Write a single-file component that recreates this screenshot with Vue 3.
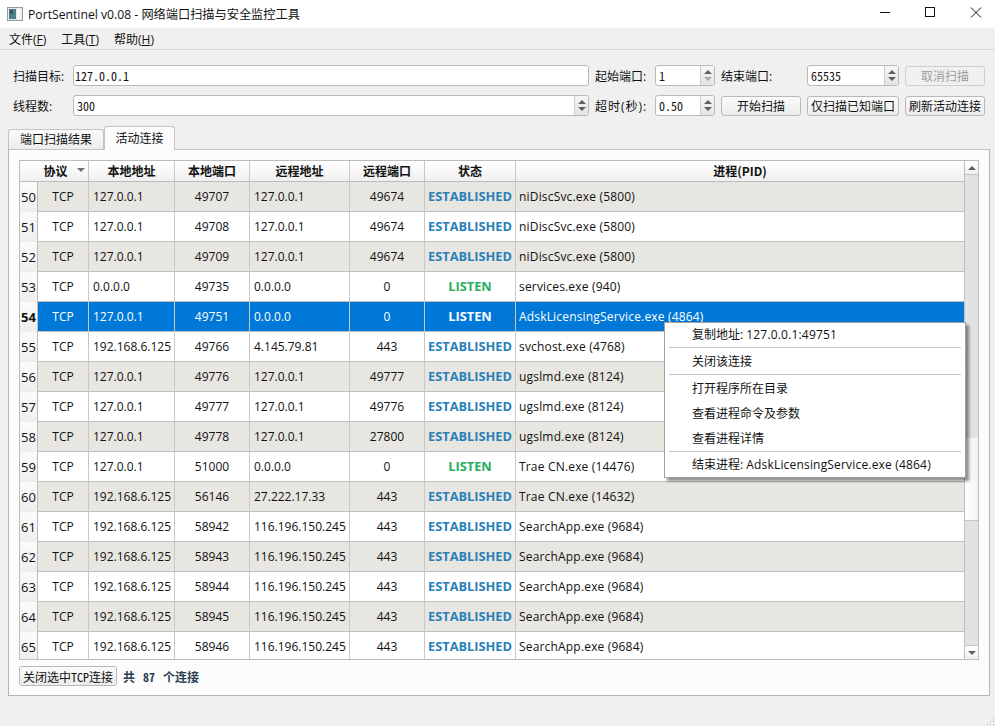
<script setup>
const proc = {
  ni: 'niDiscSvc.exe (5800)',
  ugs: 'ugslmd.exe (8124)',
  search: 'SearchApp.exe (9684)',
}
const LOCAL = '127.0.0.1'
const LAN = '192.168.6.125'
const ANY = '0.0.0.0'
const FAR = '116.196.150.245'

const rows = [
  [50, LOCAL, 49707, LOCAL, 49674, 'ESTABLISHED', proc.ni],
  [51, LOCAL, 49708, LOCAL, 49674, 'ESTABLISHED', proc.ni],
  [52, LOCAL, 49709, LOCAL, 49674, 'ESTABLISHED', proc.ni],
  [53, ANY, 49735, ANY, 0, 'LISTEN', 'services.exe (940)'],
  [54, LOCAL, 49751, ANY, 0, 'LISTEN', 'AdskLicensingService.exe (4864)'],
  [55, LAN, 49766, '4.145.79.81', 443, 'ESTABLISHED', 'svchost.exe (4768)'],
  [56, LOCAL, 49776, LOCAL, 49777, 'ESTABLISHED', proc.ugs],
  [57, LOCAL, 49777, LOCAL, 49776, 'ESTABLISHED', proc.ugs],
  [58, LOCAL, 49778, LOCAL, 27800, 'ESTABLISHED', proc.ugs],
  [59, LOCAL, 51000, ANY, 0, 'LISTEN', 'Trae CN.exe (14476)'],
  [60, LAN, 56146, '27.222.17.33', 443, 'ESTABLISHED', 'Trae CN.exe (14632)'],
  [61, LAN, 58942, FAR, 443, 'ESTABLISHED', proc.search],
  [62, LAN, 58943, FAR, 443, 'ESTABLISHED', proc.search],
  [63, LAN, 58944, FAR, 443, 'ESTABLISHED', proc.search],
  [64, LAN, 58945, FAR, 443, 'ESTABLISHED', proc.search],
  [65, LAN, 58946, FAR, 443, 'ESTABLISHED', proc.search],
].map(([no, local, lport, remote, rport, state, process]) => ({ no, local, lport, remote, rport, state, process }))

const headers = ['协议', '本地地址', '本地端口', '远程地址', '远程端口', '状态', '进程(PID)']
const selectedNo = 54

const rowClass = (row) => ({
  selected: row.no === selectedNo,
  alt: row.no % 2 === 0,
})
</script>

<template>
  <div class="window">
    <header class="titlebar">
      <svg class="app-icon" width="16" height="16" viewBox="0 0 16 16">
        <rect x="0.5" y="1.5" width="15" height="13" fill="#e8e8e8" stroke="#9a9a9a" />
        <rect x="2" y="3" width="7" height="10" fill="#4f7f88" />
        <rect x="3" y="4" width="3" height="4" fill="#2f5566" />
        <rect x="10" y="3" width="4" height="10" fill="#f7f7f7" />
      </svg>
      <span class="title">PortSentinel v0.08 - 网络端口扫描与安全监控工具</span>
      <div class="win-controls">
        <svg width="46" height="28" viewBox="0 0 46 28"><path d="M18 12.5h10" stroke="#111" fill="none" /></svg>
        <svg width="46" height="28" viewBox="0 0 46 28"><rect x="18.5" y="7.5" width="9" height="9" stroke="#111" fill="none" /></svg>
        <svg width="46" height="28" viewBox="0 0 46 28"><path d="M18 7.5l10 10M28 7.5l-10 10" stroke="#111" fill="none" /></svg>
      </div>
    </header>

    <nav class="menubar">
      <span>文件(<u>F</u>)</span>
      <span>工具(<u>T</u>)</span>
      <span>帮助(<u>H</u>)</span>
    </nav>

    <section class="form">
      <label>扫描目标:</label>
      <div class="input field mono">127.0.0.1</div>
      <label>起始端口:</label>
      <div class="spin field mono">
        <span class="val">1</span>
        <span class="arrows"><i class="up"></i><i class="down off"></i></span>
      </div>
      <label>结束端口:</label>
      <div class="spin field mono">
        <span class="val">65535</span>
        <span class="arrows"><i class="up off"></i><i class="down"></i></span>
      </div>
      <button class="btn" disabled>取消扫描</button>

      <label>线程数:</label>
      <div class="spin field mono">
        <span class="val">300</span>
        <span class="arrows"><i class="up"></i><i class="down"></i></span>
      </div>
      <label class="timeout">超时(秒):</label>
      <div class="spin field mono">
        <span class="val">0.50</span>
        <span class="arrows"><i class="up"></i><i class="down"></i></span>
      </div>
      <button class="btn">开始扫描</button>
      <button class="btn">仅扫描已知端口</button>
      <button class="btn">刷新活动连接</button>
    </section>

    <div class="tabs">
      <div class="tab">端口扫描结果</div>
      <div class="tab active">活动连接</div>
    </div>

    <section class="panel">
      <div class="table">
        <div class="table-main">
          <div class="thead">
            <div class="corner"></div>
            <div v-for="(h, i) in headers" :key="h" class="th">
              {{ h }}
              <span v-if="i === 0" class="sort"></span>
            </div>
          </div>
          <div class="tbody">
            <div v-for="row in rows" :key="row.no" class="tr" :class="rowClass(row)">
              <div class="rowhead">{{ row.no }}</div>
              <div class="td center">TCP</div>
              <div class="td">{{ row.local }}</div>
              <div class="td center">{{ row.lport }}</div>
              <div class="td">{{ row.remote }}</div>
              <div class="td center">{{ row.rport }}</div>
              <div class="td center state" :class="row.state.toLowerCase()">{{ row.state }}</div>
              <div class="td process">{{ row.process }}</div>
            </div>
          </div>
        </div>
        <div class="scrollbar">
          <div class="sb-btn"><i class="up"></i></div>
          <div class="sb-track">
            <div class="sb-handle"></div>
          </div>
          <div class="sb-btn"><i class="down"></i></div>
        </div>
      </div>

      <div class="statusline">
        <button class="btn close-btn">关闭选中<span class="mono">TCP</span>连接</button>
        <span class="count">共<span class="mono">87</span>个连接</span>
      </div>

      <div class="context-menu">
        <div class="item short">复制地址: <span class="latin">127.0.0.1:49751</span></div>
        <div class="sep"></div>
        <div class="item">关闭该连接</div>
        <div class="sep"></div>
        <div class="item">打开程序所在目录</div>
        <div class="item">查看进程命令及参数</div>
        <div class="item">查看进程详情</div>
        <div class="sep"></div>
        <div class="item short">结束进程: <span class="latin">AdskLicensingService.exe (4864)</span></div>
      </div>
    </section>

    <svg class="grip" width="9" height="9" viewBox="0 0 9 9" fill="#b4b4b4">
      <rect x="7" y="1" width="1" height="1" />
      <rect x="4" y="4" width="1" height="1" />
      <rect x="7" y="4" width="1" height="1" />
      <rect x="1" y="7" width="1" height="1" />
      <rect x="4" y="7" width="1" height="1" />
      <rect x="7" y="7" width="1" height="1" />
    </svg>
  </div>
</template>

<style>
html, body { margin: 0; background: #f0f0f0; }
</style>

<style scoped>
.window {
  position: relative;
  width: 995px;
  height: 726px;
  overflow: hidden;
  background: #f0f0f0;
  color: #000;
  font-family: "Open Sans", "Noto Sans CJK SC", sans-serif;
  font-size: 12px;
}

/* half-width latin from the CJK face, 6px per char like the bitmap font in the app */
.mono {
  font-family: "Noto Sans CJK SC", monospace;
  font-feature-settings: "hwid";
}

.titlebar {
  height: 28px;
  background: #fff;
  display: flex;
  align-items: center;
  padding-left: 7px;
}
.app-icon { margin-right: 5px; }
.title { font-size: 12.2px; color: #111; }
.win-controls { margin-left: auto; margin-right: -4px; display: flex; }
.win-controls svg { display: block; }
.win-controls svg:nth-child(2) { margin-left: -1px; }

.menubar {
  height: 21px;
  display: flex;
  align-items: center;
  padding-left: 9px;
  gap: 15px;
  border-bottom: 1px solid #d7d7d7;
  font-size: 12px;
  color: #111;
}

.form {
  margin-top: 15px;
  padding-left: 13px;
  display: grid;
  grid-template-columns: 54px 516px 54px 60px 80px 92px 80px;
  grid-auto-rows: 21px;
  column-gap: 6px;
  row-gap: 9px;
  align-items: center;
}
.form label { font-size: 12px; color: #111; white-space: nowrap; }
.form label.timeout { letter-spacing: 1px; }

.field {
  height: 21px;
  box-sizing: border-box;
  background: #fff;
  border: 1px solid #b9b9b9;
  border-radius: 3px;
  font-size: 12px;
  color: #111;
  display: flex;
  align-items: center;
}
.input { padding-left: 1px; }
.spin .val { flex: 1; padding-left: 3px; }

.arrows {
  width: 13px;
  height: 100%;
  border-left: 1px solid #cfcfcf;
  background: linear-gradient(#f6f6f6, #e4e4e4);
  border-radius: 0 2px 2px 0;
  display: flex;
  flex-direction: column;
  align-items: center;
  justify-content: center;
  gap: 3px;
}
i.up, i.down {
  display: block;
  width: 0;
  height: 0;
  border-left: 4px solid transparent;
  border-right: 4px solid transparent;
}
i.up { border-bottom: 4px solid #606060; }
i.down { border-top: 4px solid #606060; }
i.up.off { border-bottom-color: #606060; }
i.down.off { border-top-color: #aaa; }

.btn {
  height: 20px;
  box-sizing: border-box;
  padding: 0;
  border: 1px solid #b9b9b9;
  border-radius: 3px;
  background: linear-gradient(#fbfbfb, #ececec);
  font-family: "Noto Sans CJK SC", sans-serif;
  font-size: 12px;
  line-height: 17px;
  color: #111;
  white-space: nowrap;
}
.btn:disabled { color: #9c9c9c; background: #f0f0f0; border-color: #cfcfcf; }

.tabs {
  margin-top: 10px;
  padding-left: 8px;
  display: flex;
  align-items: flex-end;
  height: 23px;
  position: relative;
  z-index: 1;
}
.tab {
  width: 96px;
  height: 20px;
  box-sizing: border-box;
  border: 1px solid #c4c4c4;
  border-bottom: none;
  border-radius: 3px 3px 0 0;
  background: linear-gradient(#fafafa, #ececec);
  text-align: center;
  font-size: 12px;
  line-height: 20px;
  color: #111;
}
.tab.active {
  width: 71px;
  height: 24px;
  margin-bottom: -1px;
  background: #fcfcfc;
  line-height: 23px;
}

.panel {
  position: relative;
  width: 982px;
  height: 547px;
  box-sizing: border-box;
  margin-left: 8px;
  padding: 10px 10px 0;
  background: #fcfcfc;
  border: 1px solid #b4b4b4;
  border-top-color: #c4c4c4;
}

.table {
  width: 960px;
  height: 500px;
  box-sizing: border-box;
  border: 1px solid #bcbcbc;
  display: flex;
  background: #fff;
}
.table-main { width: 944px; flex: none; overflow: hidden; }

.thead, .tr {
  display: grid;
  grid-template-columns: 18px 51px 86px 75px 100px 75px 91px 448px;
}
.thead {
  height: 21px;
  box-sizing: border-box;
  border-bottom: 1px solid #bcbcbc;
  background: linear-gradient(#ffffff, #f0f0f0);
}
.th {
  position: relative;
  border-right: 1px solid #c8c8c8;
  text-align: center;
  font-family: "Noto Sans CJK SC", sans-serif;
  font-weight: 700;
  font-size: 12px;
  line-height: 20px;
  color: #111;
}
.th:last-child { border-right: none; }
.th:nth-child(2) { padding-right: 14px; margin-left: -1px; }
.sort {
  position: absolute;
  right: 3px;
  top: 7px;
  border-left: 4px solid transparent;
  border-right: 4px solid transparent;
  border-top: 4px solid #707070;
}

.tr {
  height: 30px;
  box-sizing: border-box;
  border-bottom: 1px solid #c0c0c0;
  font-size: 12px;
  line-height: 29px;
  color: #111;
}
.tr.alt { background: #e8e6e1; }
.tr.selected { background: #0078d7; color: #fff; }

.rowhead {
  background: linear-gradient(#fbfbfb, #eeeeee);
  border-right: 1px solid #bcbcbc;
  text-align: center;
  font-size: 13px;
  color: #111;
  line-height: 31px;
}
.tr.selected .rowhead { font-weight: 700; color: #111; }

.td {
  padding-left: 4px;
  border-right: 1px solid #c8c8c8;
  white-space: nowrap;
  overflow: hidden;
}
.td:last-child { border-right: none; }
.td.center { padding-left: 0; text-align: center; }
.td.process { padding-left: 3px; letter-spacing: 0.18px; }
.state { font-weight: 700; font-size: 12.8px; }
.state.established { color: #2980b9; }
.state.listen { color: #27ae60; }
.tr.selected .state { color: #fff; }

.scrollbar {
  width: 14px;
  flex: none;
  box-sizing: border-box;
  border-left: 1px solid #c0c0c0;
  display: flex;
  flex-direction: column;
  background: #e2e2e2;
}
.sb-btn {
  height: 14px;
  flex: none;
  box-sizing: border-box;
  background: linear-gradient(#ffffff, #f0f0f0);
  border: solid #c4c4c4;
  border-width: 0;
  display: flex;
  align-items: center;
  justify-content: center;
}
.sb-btn:first-child { border-bottom-width: 1px; }
.sb-btn:last-child { border-top-width: 1px; }
.sb-track {
  flex: 1;
  padding-top: 263px;
}
.sb-handle {
  height: 83px;
  box-sizing: border-box;
  background: linear-gradient(90deg, #ffffff, #f2f2f2);
  border-bottom: 1px solid #c4c4c4;
}

.statusline {
  margin-top: 6px;
  display: flex;
  align-items: center;
  gap: 6px;
}
.close-btn { width: 98px; }
.count {
  font-family: "Noto Sans CJK SC", sans-serif;
  font-weight: 700;
  font-size: 12px;
  color: #2c3e50;
  white-space: pre;
}
.count .mono { margin: 0 8px; }

.context-menu {
  position: absolute;
  left: 655px;
  top: 172px;
  width: 302px;
  box-sizing: border-box;
  background: #fff;
  border: 1px solid #a0a0a0;
  box-shadow: 3px 3px 3px rgba(0, 0, 0, 0.45);
  font-size: 12px;
  color: #111;
  z-index: 5;
}
.item {
  height: 25px;
  line-height: 25px;
  padding-left: 27px;
  white-space: nowrap;
}
.item.short { height: 24px; line-height: 24px; }
.item .latin { letter-spacing: 0.18px; }
.sep {
  height: 1px;
  margin: 0 4px 1px;
  background: #c8c8c8;
}

.grip {
  position: absolute;
  right: 0;
  bottom: 0;
}
</style>
